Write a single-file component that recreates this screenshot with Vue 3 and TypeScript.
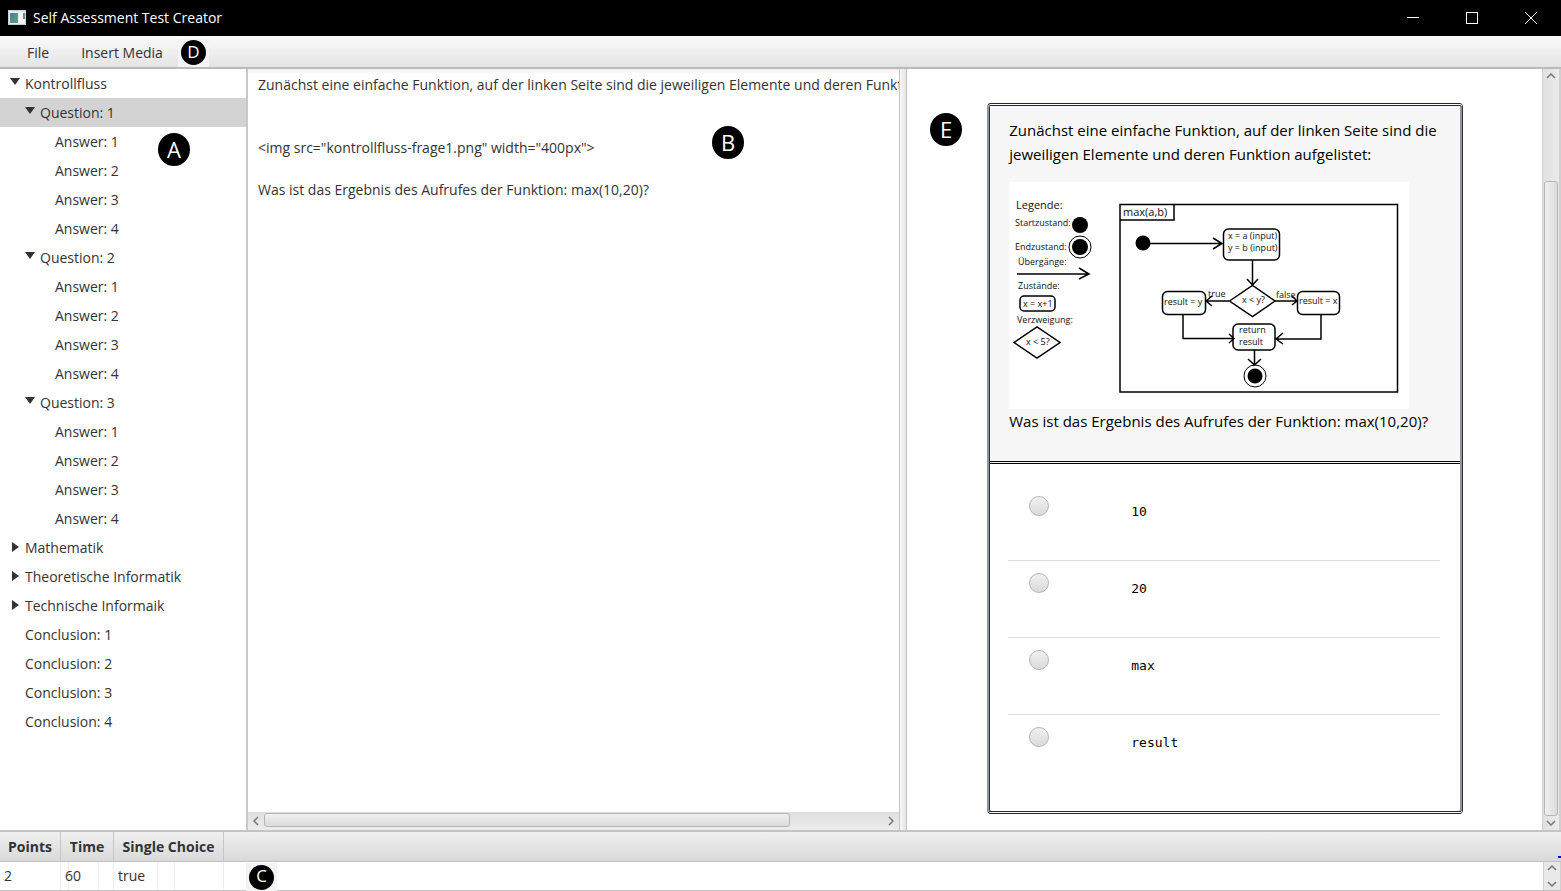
<script setup lang="ts">
import { computed, ref } from 'vue'

interface TreeNode {
  id: string
  label: string
  level: number
  parent?: string
  branch?: boolean
}

const answersOf = (q: string): TreeNode[] =>
  [1, 2, 3, 4].map((n) => ({ id: `${q}a${n}`, label: `Answer: ${n}`, level: 2, parent: q }))

const nodes: TreeNode[] = [
  { id: 'k', label: 'Kontrollfluss', level: 0, branch: true },
  ...[1, 2, 3].flatMap((n): TreeNode[] => [
    { id: `q${n}`, label: `Question: ${n}`, level: 1, parent: 'k', branch: true },
    ...answersOf(`q${n}`),
  ]),
  { id: 'm', label: 'Mathematik', level: 0, branch: true },
  { id: 'th', label: 'Theoretische Informatik', level: 0, branch: true },
  { id: 'te', label: 'Technische Informaik', level: 0, branch: true },
  ...[1, 2, 3, 4].map((n) => ({ id: `c${n}`, label: `Conclusion: ${n}`, level: 0 })),
]

const open = ref<string[]>(['k', 'q1', 'q2', 'q3'])
const selected = ref('q1')

const visible = computed(() =>
  nodes.filter((node) => {
    let p = node.parent
    while (p) {
      if (!open.value.includes(p)) return false
      p = nodes.find((n) => n.id === p)?.parent
    }
    return true
  }),
)

function pick(node: TreeNode) {
  if (node.branch && (selected.value === node.id || !open.value.includes(node.id))) {
    open.value = open.value.includes(node.id)
      ? open.value.filter((i) => i !== node.id)
      : [...open.value, node.id]
  }
  selected.value = node.id
}

const source = ref(
  [
    'Zunächst eine einfache Funktion, auf der linken Seite sind die jeweiligen Elemente und deren Funktion aufgelistet:',
    '',
    '',
    '<img src="kontrollfluss-frage1.png" width="400px">',
    '',
    'Was ist das Ergebnis des Aufrufes der Funktion: max(10,20)?',
  ].join('\n'),
)

const answers = ['10', '20', 'max', 'result']
const chosen = ref('')
</script>

<template>
  <div class="window">
    <header class="titlebar">
      <svg class="app-icon" width="18" height="15" viewBox="0 0 18 15" aria-hidden="true">
        <defs>
          <linearGradient id="app-fill" x1="0" y1="0" x2="1" y2="1">
            <stop offset="0" stop-color="#4a7d99" />
            <stop offset="1" stop-color="#55a883" />
          </linearGradient>
        </defs>
        <rect width="18" height="15" fill="#e9edf0" />
        <rect x="2" y="3" width="8" height="10" fill="url(#app-fill)" />
        <rect x="11" y="3" width="5" height="10" fill="#f7f8fa" />
        <rect x="15" y="3" width="2" height="6" fill="#4b9a9a" />
        <rect x=".5" y=".5" width="17" height="14" fill="none" stroke="#c9cdd1" />
      </svg>
      <h1>Self Assessment Test Creator</h1>
      <div class="window-buttons">
        <button type="button" aria-label="Minimize">
          <svg width="12" height="12" viewBox="0 0 12 12"><path d="M0 5.5H12" /></svg>
        </button>
        <button type="button" aria-label="Maximize">
          <svg width="12" height="12" viewBox="0 0 12 12"><rect x=".5" y=".5" width="11" height="11" /></svg>
        </button>
        <button type="button" aria-label="Close">
          <svg width="12" height="12" viewBox="0 0 12 12"><path d="M0 0L12 12M12 0L0 12" /></svg>
        </button>
      </div>
    </header>

    <nav class="menubar">
      <button type="button">File</button>
      <button type="button">Insert Media</button>
      <span class="badge-patch"><span class="badge small">D</span></span>
    </nav>

    <main class="panes">
      <section class="tree-pane">
        <ul class="tree" role="tree">
          <li v-for="node in visible" :key="node.id" role="none">
            <button
              type="button"
              role="treeitem"
              :aria-expanded="node.branch ? open.includes(node.id) : undefined"
              :class="['row', `level-${node.level}`, { selected: selected === node.id }]"
              @click="pick(node)"
            >
              <span :class="['arrow', { branch: node.branch, open: open.includes(node.id) }]"></span>
              {{ node.label }}
            </button>
          </li>
        </ul>
        <span class="badge callout-a">A</span>
      </section>

      <section class="editor-pane">
        <textarea v-model="source" wrap="off" spellcheck="false" aria-label="Question source"></textarea>
        <div class="hscroll">
          <button type="button" aria-label="Scroll left">
            <svg width="6" height="10" viewBox="0 0 6 10"><path d="M5 1L1 5L5 9" /></svg>
          </button>
          <div class="track"><div class="thumb"></div></div>
          <button type="button" aria-label="Scroll right">
            <svg width="6" height="10" viewBox="0 0 6 10"><path d="M1 1L5 5L1 9" /></svg>
          </button>
        </div>
        <span class="badge callout-b">B</span>
      </section>

      <div class="divider"></div>

      <section class="preview-pane">
        <div class="preview">
          <article class="card">
            <div class="question">
              <p>
                Zunächst eine einfache Funktion, auf der linken Seite sind die jeweiligen Elemente und deren Funktion
                aufgelistet:
              </p>
              <svg class="diagram" width="400" height="227" viewBox="0 0 400 227" role="img" aria-label="Kontrollfluss max(a,b)">
                <rect width="400" height="227" fill="#fff" />
                <g class="labels">
                  <text class="caption" x="7" y="27">Legende:</text>
                  <text x="6" y="44">Startzustand:</text>
                  <text x="6" y="68">Endzustand:</text>
                  <text x="9" y="83">Übergänge:</text>
                  <text x="9" y="107">Zustände:</text>
                  <text x="14" y="125">x = x+1</text>
                  <text x="8" y="141">Verzweigung:</text>
                  <text x="17" y="163">x &lt; 5?</text>
                  <text class="caption" x="114" y="34">max(a,b)</text>
                  <text x="219" y="57">x = a (input)</text>
                  <text x="219" y="69">y = b (input)</text>
                  <text x="155" y="123">result = y</text>
                  <text x="199" y="115">true</text>
                  <text x="233" y="121">x &lt; y?</text>
                  <text x="267" y="116">false</text>
                  <text x="290" y="122">result = x</text>
                  <text x="230" y="151">return</text>
                  <text x="230" y="163">result</text>
                </g>
                <g class="dots">
                  <circle cx="71" cy="43" r="8" />
                  <circle cx="71" cy="65" r="8" />
                  <circle cx="134" cy="61" r="7.5" />
                  <circle cx="246" cy="194" r="7.5" />
                </g>
                <g class="rings">
                  <circle cx="71" cy="65" r="11" />
                  <circle cx="246" cy="194" r="11" />
                </g>
                <g class="lines">
                  <rect x="111" y="22.5" width="277.5" height="187.5" />
                  <path d="M111 38H165V23" />
                  <path d="M8 92H79M70 86L80 92L70 97" />
                  <rect x="11" y="114" width="35" height="15" rx="4" />
                  <path d="M5 160.500L28 145L51 160.500L28 176Z" />
                  <rect x="214.500" y="47" width="56" height="31" rx="5" />
                  <rect x="153.500" y="109.500" width="43" height="23" rx="5" />
                  <rect x="288.500" y="109.500" width="42" height="23" rx="5" />
                  <rect x="224" y="142" width="42" height="26" rx="5" />
                  <path d="M220.500 119L243.500 103.500L266 119L243.500 134.500Z" />
                  <path d="M141 61.500H213M204 56L213 61.500L204 67" />
                  <path d="M243.500 78V103M238 97L243.500 103L249 97" />
                  <path d="M220 119H197M203 114L197 119L203 124" />
                  <path d="M266 119H288M283 114L288 119L283 123" />
                  <path d="M174 133V156.500H224M220 152L225 156.500L220 161" />
                  <path d="M312 133V157H267M274 151L267 157L274 162" />
                  <path d="M245.500 168V182M239 177L245.500 183L252 177" />
                </g>
              </svg>
              <p>Was ist das Ergebnis des Aufrufes der Funktion: max(10,20)?</p>
            </div>
            <div class="answers">
              <label v-for="answer in answers" :key="answer" class="answer">
                <input v-model="chosen" type="radio" name="answer" :value="answer" />
                <code>{{ answer }}</code>
              </label>
            </div>
          </article>
        </div>
        <div class="vscroll">
          <button type="button" aria-label="Scroll up">
            <svg width="10" height="6" viewBox="0 0 10 6"><path d="M1 5L5 1L9 5" /></svg>
          </button>
          <div class="track"><div class="thumb"></div></div>
          <button type="button" aria-label="Scroll down">
            <svg width="10" height="6" viewBox="0 0 10 6"><path d="M1 1L5 5L9 1" /></svg>
          </button>
        </div>
        <span class="badge callout-e">E</span>
      </section>
    </main>

    <footer class="properties">
      <table>
        <colgroup>
          <col class="col-points" />
          <col class="col-time" />
          <col class="col-choice" />
          <col />
        </colgroup>
        <thead>
          <tr>
            <th scope="col">Points</th>
            <th scope="col">Time</th>
            <th scope="col">Single Choice</th>
            <td></td>
          </tr>
        </thead>
        <tbody>
          <tr>
            <td>2</td>
            <td class="time">60</td>
            <td class="choice">true</td>
            <td></td>
          </tr>
        </tbody>
      </table>
      <div class="row-scroll">
        <button type="button" aria-label="Previous row">
          <svg width="10" height="6" viewBox="0 0 10 6"><path d="M1 5L5 1L9 5" /></svg>
        </button>
        <button type="button" aria-label="Next row">
          <svg width="10" height="6" viewBox="0 0 10 6"><path d="M1 1L5 5L9 1" /></svg>
        </button>
      </div>
      <span class="badge-patch callout-c"><span class="badge small">C</span></span>
      <span class="marker"></span>
    </footer>
  </div>
</template>

<style>
body {
  margin: 0;
}
</style>

<style scoped>
* {
  box-sizing: border-box;
}

.window {
  display: flex;
  flex-direction: column;
  height: 100vh;
  overflow: hidden;
  background: #fff;
  color: #333;
  font: 14px/20px 'Open Sans', 'Noto Sans', sans-serif;
}

button {
  margin: 0;
  padding: 0;
  border: 0;
  background: none;
  color: inherit;
  font: inherit;
}

.titlebar {
  display: flex;
  flex: none;
  align-items: center;
  height: 36px;
  padding: 0 1px 0 8px;
  background: #000;
  color: #fff;
}

.app-icon {
  margin-bottom: 2px;
}

.titlebar h1 {
  flex: 1;
  margin: 0 0 0 7px;
  font-size: 14px;
  font-weight: 400;
}

.window-buttons {
  display: flex;
}

.window-buttons button {
  display: flex;
  align-items: center;
  justify-content: center;
  width: 59px;
  height: 34px;
}

.window-buttons svg {
  fill: none;
  stroke: #fff;
}

.menubar {
  display: flex;
  flex: none;
  align-items: center;
  height: 33px;
  padding: 2px 0 0 27px;
  gap: 32px;
  border-bottom: 2px solid #bababa;
  background: linear-gradient(#fafafa, #e4e4e4);
}

.badge {
  display: flex;
  align-items: center;
  justify-content: center;
  width: 32px;
  height: 33px;
  padding-bottom: 2px;
  border-radius: 50%;
  background: #000;
  color: #fff;
  font: 500 22px/30px 'Open Sans', sans-serif;
}

.badge.small {
  width: 25px;
  height: 25px;
  font-size: 17px;
  line-height: 22px;
}

.badge-patch {
  display: flex;
  align-items: center;
  justify-content: center;
  width: 31px;
  height: 28px;
  background: #f4f4f4;
}

.menubar .badge-patch {
  margin-left: -17px;
}

.callout-a,
.callout-b,
.callout-c,
.callout-e {
  position: absolute;
}

.callout-a {
  left: 158px;
  top: 64px;
}

.callout-b {
  left: 464px;
  top: 57px;
}

.callout-c {
  left: 246px;
  top: 31px;
}

.callout-e {
  left: 23px;
  top: 44px;
}

.panes {
  display: flex;
  flex: 1;
  min-height: 0;
}

.tree-pane {
  position: relative;
  flex: none;
  width: 248px;
  border-right: 2px solid #c8c8c8;
}

.tree {
  margin: 0;
  padding: 0;
  list-style: none;
}

.row {
  display: flex;
  align-items: center;
  width: 100%;
  height: 29px;
  text-align: left;
}

.row.selected {
  background: #d3d3d3;
}

.level-0 {
  padding-left: 10px;
}

.level-1 {
  padding-left: 25px;
}

.level-2 {
  padding-left: 40px;
}

.arrow {
  width: 15px;
  height: 11px;
  flex: none;
}

.arrow.branch::before {
  content: '';
  display: block;
  width: 7px;
  height: 10px;
  margin-left: 2px;
  background: #333;
  clip-path: polygon(0 0, 100% 50%, 0 100%);
}

.arrow.branch.open::before {
  width: 10px;
  height: 7px;
  margin-left: 0;
  clip-path: polygon(0 0, 100% 0, 50% 100%);
}

.editor-pane {
  position: relative;
  display: flex;
  flex: 651;
  flex-direction: column;
  min-width: 0;
}

textarea {
  flex: 1;
  width: 100%;
  margin: 0;
  padding: 5px 0 0 10px;
  border: 0;
  outline: 0;
  resize: none;
  overflow: hidden;
  background: linear-gradient(#f0f0f0, #fff 5px);
  color: #333;
  font: 14px/21px 'Open Sans', 'Noto Sans', sans-serif;
  white-space: pre;
}

.hscroll {
  display: flex;
  flex: none;
  height: 18px;
  padding-bottom: 2px;
  border-top: 1px solid #ddd;
  background: linear-gradient(#e0e0e0, #ececec);
}

.hscroll button,
.vscroll button,
.row-scroll button {
  display: flex;
  align-items: center;
  justify-content: center;
}

.hscroll button {
  width: 16px;
}

.hscroll svg,
.vscroll svg,
.row-scroll svg {
  fill: none;
  stroke: #777;
  stroke-width: 1.5;
}

.track {
  flex: 1;
}

.thumb {
  border: 1px solid #b5b5b5;
  border-radius: 3px;
}

.hscroll .thumb {
  width: 85%;
  height: 14px;
  background: linear-gradient(#f0f0f0, #dcdcdc);
}

.divider {
  flex: none;
  width: 8px;
  border: solid #c4c4c4;
  border-width: 0 1px;
  background: linear-gradient(90deg, #f8f8f8, #e4e4e4);
}

.preview-pane {
  position: relative;
  display: flex;
  flex: 654;
  min-width: 0;
}

.preview {
  flex: 1;
  min-width: 0;
  padding-left: 1px;
  overflow: hidden;
}

/* The side borders are a grey line with a dark one on its right. */
.card {
  width: 75%;
  margin: 34px auto 0;
  padding: 0 2px 0 1px;
  border: 3px double #22252b;
  border-left: 2px solid #8f959b;
  border-right: 1px solid #2d3038;
  border-radius: 4px;
  box-shadow: inset 1px 0 #2d3038, inset -2px 0 #8f959b;
  color: #000;
}

.question {
  height: 358px;
  padding: 12px 19px 0;
  border-bottom: 3px double #000;
  background: #f7f7f7;
  font-size: 15px;
  line-height: 24px;
}

.question p {
  margin: 0;
}

.diagram {
  display: block;
  margin-top: 16px;
}

.labels {
  fill: #111;
  font: 9px 'Open Sans', sans-serif;
}

.labels .caption {
  font-size: 11px;
}

.rings,
.lines {
  fill: none;
  stroke: #000;
}

.lines {
  stroke-width: 1.5;
}

.answers {
  padding: 20px 20px 19px 18px;
}

.answer {
  display: flex;
  height: 77px;
  padding: 12px 0 0 21px;
  border-bottom: 1px solid #ddd;
}

.answer:last-child {
  border-bottom: 0;
}

.answer input {
  appearance: none;
  width: 20px;
  height: 20px;
  margin: 0;
  border: 1px solid #b5b5b5;
  border-radius: 50%;
  background: linear-gradient(#f0f0f0, #dadada);
}

.answer input:checked {
  background: radial-gradient(#333 4px, #e4e4e4 5px);
}

.answer code {
  margin: 6px 0 0 82px;
  font: 13px/20px 'DejaVu Sans Mono', monospace;
}

.vscroll {
  display: flex;
  flex: none;
  flex-direction: column;
  width: 19px;
  border: solid #d0d0d0;
  border-width: 0 2px 0 1px;
  background: linear-gradient(90deg, #e0e0e0, #ececec);
}

.vscroll button {
  height: 14px;
  flex: none;
}

.vscroll .track {
  padding: 98px 1px 0;
}

.vscroll .thumb {
  height: 100%;
  background: linear-gradient(90deg, #f0f0f0, #dcdcdc);
}

.properties {
  position: relative;
  flex: none;
  height: 61px;
  border-top: 2px solid #c4c4c4;
}

table {
  width: 100%;
  border-collapse: separate;
  border-spacing: 0;
  border-bottom: 1px solid #c4c4c4;
  table-layout: fixed;
}

.col-points {
  width: 61px;
}

.col-time {
  width: 53px;
}

.col-choice {
  width: 110px;
}

th,
td {
  padding: 0;
  text-align: left;
}

thead th,
thead td {
  height: 30px;
  padding-top: 1px;
  border-bottom: 1px solid #c0c0c0;
  background: linear-gradient(#f0f0f0, #d9d9d9);
}

thead th {
  border-right: 1px solid #c6c6c6;
  text-align: center;
  white-space: nowrap;
}

tbody td {
  height: 28px;
  padding-left: 4px;
  border-right: 1px solid #eee;
}

tbody .time {
  background: linear-gradient(#eee, #eee) 7px 0 / 1px 100% no-repeat, linear-gradient(#eee, #eee) 37px 0 / 1px 100% no-repeat;
}

tbody .choice {
  background: linear-gradient(#eee, #eee) 43px 0 / 1px 100% no-repeat, linear-gradient(#eee, #eee) 60px 0 / 1px 100% no-repeat;
}

.row-scroll {
  position: absolute;
  right: 0;
  bottom: 1px;
  display: flex;
  flex-direction: column;
  justify-content: space-between;
  width: 18px;
  height: 28px;
  padding: 3px 0;
  border: solid #d0d0d0;
  border-width: 0 1px;
  background: #e8e8e8;
}

.marker {
  position: absolute;
  right: 0;
  top: 24px;
  width: 3px;
  height: 2px;
  background: #00f;
}
</style>
